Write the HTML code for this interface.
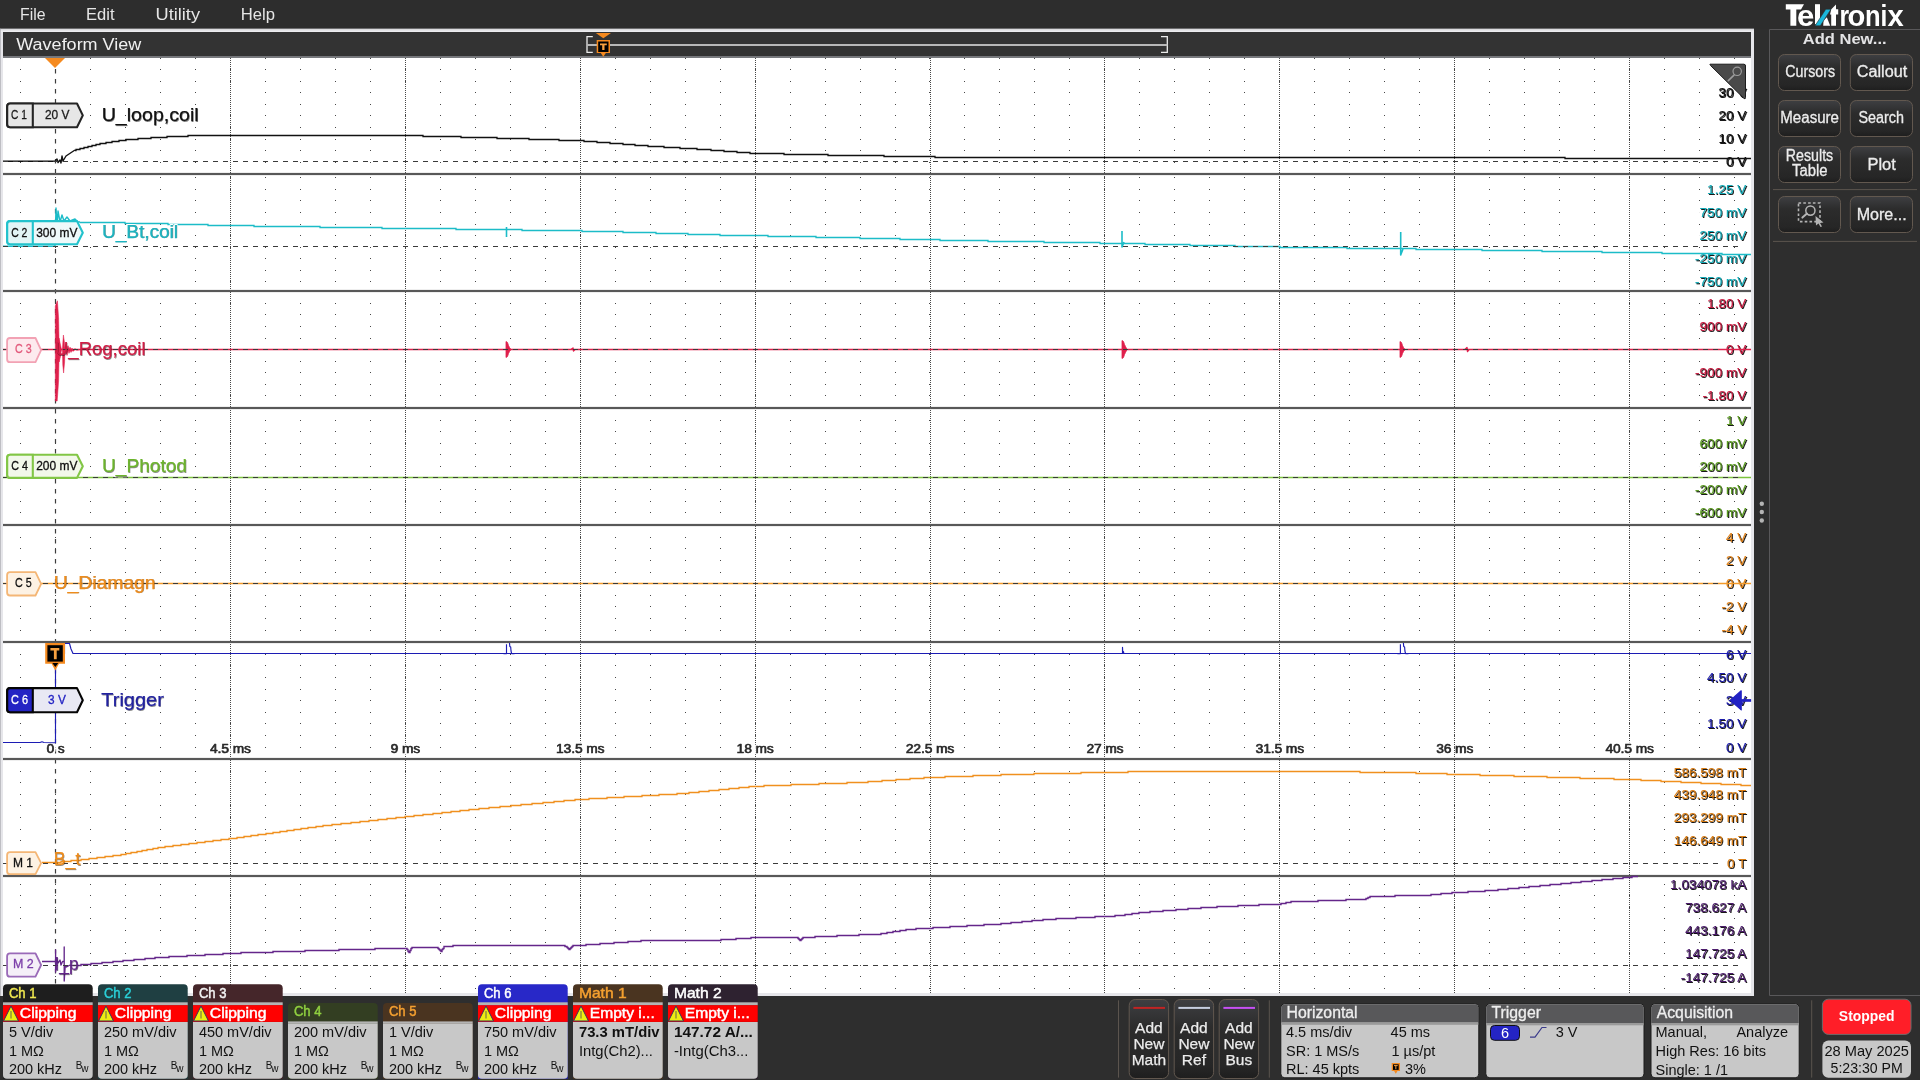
<!DOCTYPE html><html><head><meta charset="utf-8"><title>Tektronix</title><style>html,body{margin:0;padding:0;width:1920px;height:1080px;overflow:hidden;background:#2e2e2e;}body{position:relative;font-family:'Liberation Sans',sans-serif;}</style></head><body><svg width="1920" height="1080" viewBox="0 0 1920 1080" style="position:absolute;left:0;top:0;display:block;will-change:transform">
<g font-family="'Liberation Sans', sans-serif">
<rect x="0" y="0" width="1920" height="1080" fill="#2e2e2e"/>
<rect x="0" y="0" width="1920" height="28.6" fill="#2d2d2d"/>
<defs><linearGradient id="fr" x1="0" y1="0" x2="0" y2="1"><stop offset="0" stop-color="#d4d4d8"/><stop offset="1" stop-color="#f2f2f4"/></linearGradient></defs>
<rect x="0" y="28.8" width="1754" height="967.2" fill="#e6e6ea"/>
<rect x="0" y="28.8" width="1754" height="3.2" fill="url(#fr)"/>
<rect x="0" y="28.8" width="0.8" height="967.2" fill="#b4b4ba"/>
<rect x="3" y="32" width="1748" height="24.3" fill="#333333"/>
<rect x="3" y="56.3" width="1748" height="1.5" fill="#5e6064"/>
<rect x="3" y="58" width="1748" height="935" fill="#ffffff"/>
<g stroke="#484848" stroke-width="1" stroke-dasharray="1 33.98" shape-rendering="crispEdges"><line x1="20" x2="1751" y1="58.5" y2="58.5"/><line x1="20" x2="1751" y1="69.5" y2="69.5"/><line x1="20" x2="1751" y1="81.5" y2="81.5"/><line x1="20" x2="1751" y1="92.5" y2="92.5"/><line x1="20" x2="1751" y1="104.5" y2="104.5"/><line x1="20" x2="1751" y1="115.5" y2="115.5"/><line x1="20" x2="1751" y1="127.5" y2="127.5"/><line x1="20" x2="1751" y1="139.5" y2="139.5"/><line x1="20" x2="1751" y1="150.5" y2="150.5"/><line x1="20" x2="1751" y1="162.5" y2="162.5"/><line x1="20" x2="1751" y1="177.5" y2="177.5"/><line x1="20" x2="1751" y1="189.5" y2="189.5"/><line x1="20" x2="1751" y1="200.5" y2="200.5"/><line x1="20" x2="1751" y1="212.5" y2="212.5"/><line x1="20" x2="1751" y1="224.5" y2="224.5"/><line x1="20" x2="1751" y1="235.5" y2="235.5"/><line x1="20" x2="1751" y1="247.5" y2="247.5"/><line x1="20" x2="1751" y1="258.5" y2="258.5"/><line x1="20" x2="1751" y1="270.5" y2="270.5"/><line x1="20" x2="1751" y1="281.5" y2="281.5"/><line x1="20" x2="1751" y1="291.5" y2="291.5"/><line x1="20" x2="1751" y1="303.5" y2="303.5"/><line x1="20" x2="1751" y1="314.5" y2="314.5"/><line x1="20" x2="1751" y1="326.5" y2="326.5"/><line x1="20" x2="1751" y1="338.5" y2="338.5"/><line x1="20" x2="1751" y1="349.5" y2="349.5"/><line x1="20" x2="1751" y1="361.5" y2="361.5"/><line x1="20" x2="1751" y1="372.5" y2="372.5"/><line x1="20" x2="1751" y1="384.5" y2="384.5"/><line x1="20" x2="1751" y1="395.5" y2="395.5"/><line x1="20" x2="1751" y1="420.5" y2="420.5"/><line x1="20" x2="1751" y1="431.5" y2="431.5"/><line x1="20" x2="1751" y1="443.5" y2="443.5"/><line x1="20" x2="1751" y1="454.5" y2="454.5"/><line x1="20" x2="1751" y1="466.5" y2="466.5"/><line x1="20" x2="1751" y1="477.5" y2="477.5"/><line x1="20" x2="1751" y1="489.5" y2="489.5"/><line x1="20" x2="1751" y1="501.5" y2="501.5"/><line x1="20" x2="1751" y1="512.5" y2="512.5"/><line x1="20" x2="1751" y1="525.5" y2="525.5"/><line x1="20" x2="1751" y1="537.5" y2="537.5"/><line x1="20" x2="1751" y1="548.5" y2="548.5"/><line x1="20" x2="1751" y1="560.5" y2="560.5"/><line x1="20" x2="1751" y1="572.5" y2="572.5"/><line x1="20" x2="1751" y1="583.5" y2="583.5"/><line x1="20" x2="1751" y1="595.5" y2="595.5"/><line x1="20" x2="1751" y1="606.5" y2="606.5"/><line x1="20" x2="1751" y1="618.5" y2="618.5"/><line x1="20" x2="1751" y1="630.5" y2="630.5"/><line x1="20" x2="1751" y1="642.5" y2="642.5"/><line x1="20" x2="1751" y1="654.5" y2="654.5"/><line x1="20" x2="1751" y1="665.5" y2="665.5"/><line x1="20" x2="1751" y1="677.5" y2="677.5"/><line x1="20" x2="1751" y1="689.5" y2="689.5"/><line x1="20" x2="1751" y1="700.5" y2="700.5"/><line x1="20" x2="1751" y1="712.5" y2="712.5"/><line x1="20" x2="1751" y1="723.5" y2="723.5"/><line x1="20" x2="1751" y1="735.5" y2="735.5"/><line x1="20" x2="1751" y1="747.5" y2="747.5"/><line x1="20" x2="1751" y1="759.5" y2="759.5"/><line x1="20" x2="1751" y1="771.5" y2="771.5"/><line x1="20" x2="1751" y1="782.5" y2="782.5"/><line x1="20" x2="1751" y1="794.5" y2="794.5"/><line x1="20" x2="1751" y1="805.5" y2="805.5"/><line x1="20" x2="1751" y1="817.5" y2="817.5"/><line x1="20" x2="1751" y1="829.5" y2="829.5"/><line x1="20" x2="1751" y1="840.5" y2="840.5"/><line x1="20" x2="1751" y1="852.5" y2="852.5"/><line x1="20" x2="1751" y1="863.5" y2="863.5"/><line x1="20" x2="1751" y1="884.5" y2="884.5"/><line x1="20" x2="1751" y1="895.5" y2="895.5"/><line x1="20" x2="1751" y1="907.5" y2="907.5"/><line x1="20" x2="1751" y1="918.5" y2="918.5"/><line x1="20" x2="1751" y1="930.5" y2="930.5"/><line x1="20" x2="1751" y1="942.5" y2="942.5"/><line x1="20" x2="1751" y1="953.5" y2="953.5"/><line x1="20" x2="1751" y1="965.5" y2="965.5"/><line x1="20" x2="1751" y1="976.5" y2="976.5"/><line x1="20" x2="1751" y1="988.5" y2="988.5"/></g>
<g stroke="#484848" stroke-width="1" stroke-dasharray="1 1" shape-rendering="crispEdges"><line x1="230.5" x2="230.5" y1="58" y2="993"/><line x1="405.5" x2="405.5" y1="58" y2="993"/><line x1="580.5" x2="580.5" y1="58" y2="993"/><line x1="755.5" x2="755.5" y1="58" y2="993"/><line x1="930.5" x2="930.5" y1="58" y2="993"/><line x1="1104.5" x2="1104.5" y1="58" y2="993"/><line x1="1279.5" x2="1279.5" y1="58" y2="993"/><line x1="1454.5" x2="1454.5" y1="58" y2="993"/><line x1="1629.5" x2="1629.5" y1="58" y2="993"/></g>
<line x1="55.5" x2="55.5" y1="69" y2="993" stroke="#3c3c3c" stroke-width="1.2" stroke-dasharray="4.5 5.5"/>
<rect x="3" y="172.9" width="1748" height="2.2" fill="#585858"/>
<rect x="3" y="289.9" width="1748" height="2.2" fill="#585858"/>
<rect x="3" y="406.9" width="1748" height="2.2" fill="#585858"/>
<rect x="3" y="523.9" width="1748" height="2.2" fill="#585858"/>
<rect x="3" y="640.9" width="1748" height="2.2" fill="#585858"/>
<rect x="3" y="757.9" width="1748" height="2.2" fill="#585858"/>
<rect x="3" y="874.9" width="1748" height="2.2" fill="#585858"/>
<rect x="1718.0" y="86.5" width="29.5" height="13" fill="#ffffff"/>
<text x="1747.3" y="98.1" font-size="13.6" fill="#000000" text-anchor="end" stroke="#000000" stroke-width="0.15" fill-opacity="0.9">30 V</text>
<text x="1746.4" y="97.2" font-size="13.6" fill="#111111" text-anchor="end" stroke="#111111" stroke-width="0.15">30 V</text>
<rect x="1718.0" y="109.5" width="29.5" height="13" fill="#ffffff"/>
<text x="1747.3" y="121.1" font-size="13.6" fill="#000000" text-anchor="end" stroke="#000000" stroke-width="0.15" fill-opacity="0.9">20 V</text>
<text x="1746.4" y="120.2" font-size="13.6" fill="#111111" text-anchor="end" stroke="#111111" stroke-width="0.15">20 V</text>
<rect x="1718.0" y="132.5" width="29.5" height="13" fill="#ffffff"/>
<text x="1747.3" y="144.1" font-size="13.6" fill="#000000" text-anchor="end" stroke="#000000" stroke-width="0.15" fill-opacity="0.9">10 V</text>
<text x="1746.4" y="143.2" font-size="13.6" fill="#111111" text-anchor="end" stroke="#111111" stroke-width="0.15">10 V</text>
<rect x="1725.6" y="155.5" width="21.9" height="13" fill="#ffffff"/>
<text x="1747.3" y="167.1" font-size="13.6" fill="#000000" text-anchor="end" stroke="#000000" stroke-width="0.15" fill-opacity="0.9">0 V</text>
<text x="1746.4" y="166.2" font-size="13.6" fill="#111111" text-anchor="end" stroke="#111111" stroke-width="0.15">0 V</text>
<rect x="1706.7" y="183.5" width="40.8" height="13" fill="#ffffff"/>
<text x="1747.3" y="195.1" font-size="13.6" fill="#000000" text-anchor="end" stroke="#000000" stroke-width="0.15" fill-opacity="0.9">1.25 V</text>
<text x="1746.4" y="194.2" font-size="13.6" fill="#14aab6" text-anchor="end" stroke="#14aab6" stroke-width="0.15">1.25 V</text>
<rect x="1699.1" y="206.5" width="48.4" height="13" fill="#ffffff"/>
<text x="1747.3" y="218.1" font-size="13.6" fill="#000000" text-anchor="end" stroke="#000000" stroke-width="0.15" fill-opacity="0.9">750 mV</text>
<text x="1746.4" y="217.2" font-size="13.6" fill="#14aab6" text-anchor="end" stroke="#14aab6" stroke-width="0.15">750 mV</text>
<rect x="1699.1" y="229.5" width="48.4" height="13" fill="#ffffff"/>
<text x="1747.3" y="241.1" font-size="13.6" fill="#000000" text-anchor="end" stroke="#000000" stroke-width="0.15" fill-opacity="0.9">250 mV</text>
<text x="1746.4" y="240.2" font-size="13.6" fill="#14aab6" text-anchor="end" stroke="#14aab6" stroke-width="0.15">250 mV</text>
<rect x="1694.6" y="252.5" width="52.9" height="13" fill="#ffffff"/>
<text x="1747.3" y="264.1" font-size="13.6" fill="#000000" text-anchor="end" stroke="#000000" stroke-width="0.15" fill-opacity="0.9">-250 mV</text>
<text x="1746.4" y="263.2" font-size="13.6" fill="#14aab6" text-anchor="end" stroke="#14aab6" stroke-width="0.15">-250 mV</text>
<rect x="1694.6" y="275.5" width="52.9" height="13" fill="#ffffff"/>
<text x="1747.3" y="287.1" font-size="13.6" fill="#000000" text-anchor="end" stroke="#000000" stroke-width="0.15" fill-opacity="0.9">-750 mV</text>
<text x="1746.4" y="286.2" font-size="13.6" fill="#14aab6" text-anchor="end" stroke="#14aab6" stroke-width="0.15">-750 mV</text>
<rect x="1706.7" y="297.7" width="40.8" height="13" fill="#ffffff"/>
<text x="1747.3" y="309.3" font-size="13.6" fill="#000000" text-anchor="end" stroke="#000000" stroke-width="0.15" fill-opacity="0.9">1.80 V</text>
<text x="1746.4" y="308.4" font-size="13.6" fill="#c81a40" text-anchor="end" stroke="#c81a40" stroke-width="0.15">1.80 V</text>
<rect x="1699.1" y="320.5" width="48.4" height="13" fill="#ffffff"/>
<text x="1747.3" y="332.1" font-size="13.6" fill="#000000" text-anchor="end" stroke="#000000" stroke-width="0.15" fill-opacity="0.9">900 mV</text>
<text x="1746.4" y="331.2" font-size="13.6" fill="#c81a40" text-anchor="end" stroke="#c81a40" stroke-width="0.15">900 mV</text>
<rect x="1725.6" y="343.5" width="21.9" height="13" fill="#ffffff"/>
<text x="1747.3" y="355.1" font-size="13.6" fill="#000000" text-anchor="end" stroke="#000000" stroke-width="0.15" fill-opacity="0.9">0 V</text>
<text x="1746.4" y="354.2" font-size="13.6" fill="#c81a40" text-anchor="end" stroke="#c81a40" stroke-width="0.15">0 V</text>
<rect x="1694.6" y="366.5" width="52.9" height="13" fill="#ffffff"/>
<text x="1747.3" y="378.1" font-size="13.6" fill="#000000" text-anchor="end" stroke="#000000" stroke-width="0.15" fill-opacity="0.9">-900 mV</text>
<text x="1746.4" y="377.2" font-size="13.6" fill="#c81a40" text-anchor="end" stroke="#c81a40" stroke-width="0.15">-900 mV</text>
<rect x="1702.2" y="389.3" width="45.4" height="13" fill="#ffffff"/>
<text x="1747.3" y="400.90000000000003" font-size="13.6" fill="#000000" text-anchor="end" stroke="#000000" stroke-width="0.15" fill-opacity="0.9">-1.80 V</text>
<text x="1746.4" y="400.0" font-size="13.6" fill="#c81a40" text-anchor="end" stroke="#c81a40" stroke-width="0.15">-1.80 V</text>
<rect x="1725.6" y="414.3" width="21.9" height="13" fill="#ffffff"/>
<text x="1747.3" y="425.90000000000003" font-size="13.6" fill="#000000" text-anchor="end" stroke="#000000" stroke-width="0.15" fill-opacity="0.9">1 V</text>
<text x="1746.4" y="425.0" font-size="13.6" fill="#5a9a20" text-anchor="end" stroke="#5a9a20" stroke-width="0.15">1 V</text>
<rect x="1699.1" y="437.3" width="48.4" height="13" fill="#ffffff"/>
<text x="1747.3" y="448.90000000000003" font-size="13.6" fill="#000000" text-anchor="end" stroke="#000000" stroke-width="0.15" fill-opacity="0.9">600 mV</text>
<text x="1746.4" y="448.0" font-size="13.6" fill="#5a9a20" text-anchor="end" stroke="#5a9a20" stroke-width="0.15">600 mV</text>
<rect x="1699.1" y="460.5" width="48.4" height="13" fill="#ffffff"/>
<text x="1747.3" y="472.1" font-size="13.6" fill="#000000" text-anchor="end" stroke="#000000" stroke-width="0.15" fill-opacity="0.9">200 mV</text>
<text x="1746.4" y="471.2" font-size="13.6" fill="#5a9a20" text-anchor="end" stroke="#5a9a20" stroke-width="0.15">200 mV</text>
<rect x="1694.6" y="483.5" width="52.9" height="13" fill="#ffffff"/>
<text x="1747.3" y="495.1" font-size="13.6" fill="#000000" text-anchor="end" stroke="#000000" stroke-width="0.15" fill-opacity="0.9">-200 mV</text>
<text x="1746.4" y="494.2" font-size="13.6" fill="#5a9a20" text-anchor="end" stroke="#5a9a20" stroke-width="0.15">-200 mV</text>
<rect x="1694.6" y="506.5" width="52.9" height="13" fill="#ffffff"/>
<text x="1747.3" y="518.1" font-size="13.6" fill="#000000" text-anchor="end" stroke="#000000" stroke-width="0.15" fill-opacity="0.9">-600 mV</text>
<text x="1746.4" y="517.2" font-size="13.6" fill="#5a9a20" text-anchor="end" stroke="#5a9a20" stroke-width="0.15">-600 mV</text>
<rect x="1725.6" y="531.5" width="21.9" height="13" fill="#ffffff"/>
<text x="1747.3" y="543.1" font-size="13.6" fill="#000000" text-anchor="end" stroke="#000000" stroke-width="0.15" fill-opacity="0.9">4 V</text>
<text x="1746.4" y="542.2" font-size="13.6" fill="#e0821a" text-anchor="end" stroke="#e0821a" stroke-width="0.15">4 V</text>
<rect x="1725.6" y="554.7" width="21.9" height="13" fill="#ffffff"/>
<text x="1747.3" y="566.3000000000001" font-size="13.6" fill="#000000" text-anchor="end" stroke="#000000" stroke-width="0.15" fill-opacity="0.9">2 V</text>
<text x="1746.4" y="565.4000000000001" font-size="13.6" fill="#e0821a" text-anchor="end" stroke="#e0821a" stroke-width="0.15">2 V</text>
<rect x="1725.6" y="577.3" width="21.9" height="13" fill="#ffffff"/>
<text x="1747.3" y="588.9" font-size="13.6" fill="#000000" text-anchor="end" stroke="#000000" stroke-width="0.15" fill-opacity="0.9">0 V</text>
<text x="1746.4" y="588.0" font-size="13.6" fill="#e0821a" text-anchor="end" stroke="#e0821a" stroke-width="0.15">0 V</text>
<rect x="1721.1" y="600.5" width="26.4" height="13" fill="#ffffff"/>
<text x="1747.3" y="612.1" font-size="13.6" fill="#000000" text-anchor="end" stroke="#000000" stroke-width="0.15" fill-opacity="0.9">-2 V</text>
<text x="1746.4" y="611.2" font-size="13.6" fill="#e0821a" text-anchor="end" stroke="#e0821a" stroke-width="0.15">-2 V</text>
<rect x="1721.1" y="623.5" width="26.4" height="13" fill="#ffffff"/>
<text x="1747.3" y="635.1" font-size="13.6" fill="#000000" text-anchor="end" stroke="#000000" stroke-width="0.15" fill-opacity="0.9">-4 V</text>
<text x="1746.4" y="634.2" font-size="13.6" fill="#e0821a" text-anchor="end" stroke="#e0821a" stroke-width="0.15">-4 V</text>
<rect x="1725.6" y="648.5" width="21.9" height="13" fill="#ffffff"/>
<text x="1747.3" y="660.1" font-size="13.6" fill="#000000" text-anchor="end" stroke="#000000" stroke-width="0.15" fill-opacity="0.9">6 V</text>
<text x="1746.4" y="659.2" font-size="13.6" fill="#1c1ca8" text-anchor="end" stroke="#1c1ca8" stroke-width="0.15">6 V</text>
<rect x="1706.7" y="671.5" width="40.8" height="13" fill="#ffffff"/>
<text x="1747.3" y="683.1" font-size="13.6" fill="#000000" text-anchor="end" stroke="#000000" stroke-width="0.15" fill-opacity="0.9">4.50 V</text>
<text x="1746.4" y="682.2" font-size="13.6" fill="#1c1ca8" text-anchor="end" stroke="#1c1ca8" stroke-width="0.15">4.50 V</text>
<rect x="1725.6" y="694.5" width="21.9" height="13" fill="#ffffff"/>
<text x="1747.3" y="706.1" font-size="13.6" fill="#000000" text-anchor="end" stroke="#000000" stroke-width="0.15" fill-opacity="0.9">3 V</text>
<text x="1746.4" y="705.2" font-size="13.6" fill="#1c1ca8" text-anchor="end" stroke="#1c1ca8" stroke-width="0.15">3 V</text>
<rect x="1706.7" y="717.7" width="40.8" height="13" fill="#ffffff"/>
<text x="1747.3" y="729.3000000000001" font-size="13.6" fill="#000000" text-anchor="end" stroke="#000000" stroke-width="0.15" fill-opacity="0.9">1.50 V</text>
<text x="1746.4" y="728.4000000000001" font-size="13.6" fill="#1c1ca8" text-anchor="end" stroke="#1c1ca8" stroke-width="0.15">1.50 V</text>
<rect x="1725.6" y="741.0" width="21.9" height="13" fill="#ffffff"/>
<text x="1747.3" y="752.6" font-size="13.6" fill="#000000" text-anchor="end" stroke="#000000" stroke-width="0.15" fill-opacity="0.9">0 V</text>
<text x="1746.4" y="751.7" font-size="13.6" fill="#1c1ca8" text-anchor="end" stroke="#1c1ca8" stroke-width="0.15">0 V</text>
<rect x="1673.4" y="766.0" width="74.1" height="13" fill="#ffffff"/>
<text x="1747.3" y="777.6" font-size="13.6" fill="#000000" text-anchor="end" stroke="#000000" stroke-width="0.15" fill-opacity="0.9">586.598 mT</text>
<text x="1746.4" y="776.7" font-size="13.6" fill="#d87c14" text-anchor="end" stroke="#d87c14" stroke-width="0.15">586.598 mT</text>
<rect x="1673.4" y="788.5" width="74.1" height="13" fill="#ffffff"/>
<text x="1747.3" y="800.1" font-size="13.6" fill="#000000" text-anchor="end" stroke="#000000" stroke-width="0.15" fill-opacity="0.9">439.948 mT</text>
<text x="1746.4" y="799.2" font-size="13.6" fill="#d87c14" text-anchor="end" stroke="#d87c14" stroke-width="0.15">439.948 mT</text>
<rect x="1673.4" y="811.5" width="74.1" height="13" fill="#ffffff"/>
<text x="1747.3" y="823.1" font-size="13.6" fill="#000000" text-anchor="end" stroke="#000000" stroke-width="0.15" fill-opacity="0.9">293.299 mT</text>
<text x="1746.4" y="822.2" font-size="13.6" fill="#d87c14" text-anchor="end" stroke="#d87c14" stroke-width="0.15">293.299 mT</text>
<rect x="1673.4" y="834.7" width="74.1" height="13" fill="#ffffff"/>
<text x="1747.3" y="846.3000000000001" font-size="13.6" fill="#000000" text-anchor="end" stroke="#000000" stroke-width="0.15" fill-opacity="0.9">146.649 mT</text>
<text x="1746.4" y="845.4000000000001" font-size="13.6" fill="#d87c14" text-anchor="end" stroke="#d87c14" stroke-width="0.15">146.649 mT</text>
<rect x="1726.6" y="857.3" width="20.9" height="13" fill="#ffffff"/>
<text x="1747.3" y="868.9" font-size="13.6" fill="#000000" text-anchor="end" stroke="#000000" stroke-width="0.15" fill-opacity="0.9">0 T</text>
<text x="1746.4" y="868.0" font-size="13.6" fill="#d87c14" text-anchor="end" stroke="#d87c14" stroke-width="0.15">0 T</text>
<rect x="1669.6" y="878.5" width="77.9" height="13" fill="#ffffff"/>
<text x="1747.3" y="890.1" font-size="13.6" fill="#000000" text-anchor="end" stroke="#000000" stroke-width="0.15" fill-opacity="0.9">1.034078 kA</text>
<text x="1746.4" y="889.2" font-size="13.6" fill="#4c1c6c" text-anchor="end" stroke="#4c1c6c" stroke-width="0.15">1.034078 kA</text>
<rect x="1684.7" y="901.5" width="62.8" height="13" fill="#ffffff"/>
<text x="1747.3" y="913.1" font-size="13.6" fill="#000000" text-anchor="end" stroke="#000000" stroke-width="0.15" fill-opacity="0.9">738.627 A</text>
<text x="1746.4" y="912.2" font-size="13.6" fill="#4c1c6c" text-anchor="end" stroke="#4c1c6c" stroke-width="0.15">738.627 A</text>
<rect x="1684.7" y="924.7" width="62.8" height="13" fill="#ffffff"/>
<text x="1747.3" y="936.3000000000001" font-size="13.6" fill="#000000" text-anchor="end" stroke="#000000" stroke-width="0.15" fill-opacity="0.9">443.176 A</text>
<text x="1746.4" y="935.4000000000001" font-size="13.6" fill="#4c1c6c" text-anchor="end" stroke="#4c1c6c" stroke-width="0.15">443.176 A</text>
<rect x="1684.7" y="947.7" width="62.8" height="13" fill="#ffffff"/>
<text x="1747.3" y="959.3000000000001" font-size="13.6" fill="#000000" text-anchor="end" stroke="#000000" stroke-width="0.15" fill-opacity="0.9">147.725 A</text>
<text x="1746.4" y="958.4000000000001" font-size="13.6" fill="#4c1c6c" text-anchor="end" stroke="#4c1c6c" stroke-width="0.15">147.725 A</text>
<rect x="1680.2" y="971.0" width="67.3" height="13" fill="#ffffff"/>
<text x="1747.3" y="982.6" font-size="13.6" fill="#000000" text-anchor="end" stroke="#000000" stroke-width="0.15" fill-opacity="0.9">-147.725 A</text>
<text x="1746.4" y="981.7" font-size="13.6" fill="#4c1c6c" text-anchor="end" stroke="#4c1c6c" stroke-width="0.15">-147.725 A</text>
<text x="56.1" y="753.2" font-size="13.6" fill="#000000" text-anchor="middle" stroke="#ffffff" stroke-width="3.5" paint-order="stroke" stroke-linejoin="round" fill-opacity="0.55">0 s</text>
<text x="55.5" y="752.6" font-size="13.6" fill="#2a2a2a" text-anchor="middle" stroke="#2a2a2a" stroke-width="0.5">0 s</text>
<text x="231.0" y="753.2" font-size="13.6" fill="#000000" text-anchor="middle" stroke="#ffffff" stroke-width="3.5" paint-order="stroke" stroke-linejoin="round" fill-opacity="0.55">4.5 ms</text>
<text x="230.4" y="752.6" font-size="13.6" fill="#2a2a2a" text-anchor="middle" stroke="#2a2a2a" stroke-width="0.5">4.5 ms</text>
<text x="405.90000000000003" y="753.2" font-size="13.6" fill="#000000" text-anchor="middle" stroke="#ffffff" stroke-width="3.5" paint-order="stroke" stroke-linejoin="round" fill-opacity="0.55">9 ms</text>
<text x="405.3" y="752.6" font-size="13.6" fill="#2a2a2a" text-anchor="middle" stroke="#2a2a2a" stroke-width="0.5">9 ms</text>
<text x="580.8000000000001" y="753.2" font-size="13.6" fill="#000000" text-anchor="middle" stroke="#ffffff" stroke-width="3.5" paint-order="stroke" stroke-linejoin="round" fill-opacity="0.55">13.5 ms</text>
<text x="580.2" y="752.6" font-size="13.6" fill="#2a2a2a" text-anchor="middle" stroke="#2a2a2a" stroke-width="0.5">13.5 ms</text>
<text x="755.7" y="753.2" font-size="13.6" fill="#000000" text-anchor="middle" stroke="#ffffff" stroke-width="3.5" paint-order="stroke" stroke-linejoin="round" fill-opacity="0.55">18 ms</text>
<text x="755.1" y="752.6" font-size="13.6" fill="#2a2a2a" text-anchor="middle" stroke="#2a2a2a" stroke-width="0.5">18 ms</text>
<text x="930.6" y="753.2" font-size="13.6" fill="#000000" text-anchor="middle" stroke="#ffffff" stroke-width="3.5" paint-order="stroke" stroke-linejoin="round" fill-opacity="0.55">22.5 ms</text>
<text x="930.0" y="752.6" font-size="13.6" fill="#2a2a2a" text-anchor="middle" stroke="#2a2a2a" stroke-width="0.5">22.5 ms</text>
<text x="1105.5" y="753.2" font-size="13.6" fill="#000000" text-anchor="middle" stroke="#ffffff" stroke-width="3.5" paint-order="stroke" stroke-linejoin="round" fill-opacity="0.55">27 ms</text>
<text x="1104.9" y="752.6" font-size="13.6" fill="#2a2a2a" text-anchor="middle" stroke="#2a2a2a" stroke-width="0.5">27 ms</text>
<text x="1280.3999999999999" y="753.2" font-size="13.6" fill="#000000" text-anchor="middle" stroke="#ffffff" stroke-width="3.5" paint-order="stroke" stroke-linejoin="round" fill-opacity="0.55">31.5 ms</text>
<text x="1279.8" y="752.6" font-size="13.6" fill="#2a2a2a" text-anchor="middle" stroke="#2a2a2a" stroke-width="0.5">31.5 ms</text>
<text x="1455.3" y="753.2" font-size="13.6" fill="#000000" text-anchor="middle" stroke="#ffffff" stroke-width="3.5" paint-order="stroke" stroke-linejoin="round" fill-opacity="0.55">36 ms</text>
<text x="1454.7" y="752.6" font-size="13.6" fill="#2a2a2a" text-anchor="middle" stroke="#2a2a2a" stroke-width="0.5">36 ms</text>
<text x="1630.2" y="753.2" font-size="13.6" fill="#000000" text-anchor="middle" stroke="#ffffff" stroke-width="3.5" paint-order="stroke" stroke-linejoin="round" fill-opacity="0.55">40.5 ms</text>
<text x="1629.6000000000001" y="752.6" font-size="13.6" fill="#2a2a2a" text-anchor="middle" stroke="#2a2a2a" stroke-width="0.5">40.5 ms</text>
<polyline points="3,161.3 55,161.3 57,159 58,162.5 60,160 61,163 62,156 63,161 66,156 75,150" fill="none" stroke="#111111" stroke-width="1.4" stroke-linejoin="round"/>
<path d="M75,150.5 H76 V149.5 H80 V148.5 H84 V147.5 H88 V146.5 H92 V145.5 H96 V144.5 H100 V143.5 H106 V142.5 H112 V141.5 H119 V140.5 H126 V139.5 H138 V138.5 H151 V137.5 H167 V136.5 H188 V135.5 H423 V136.5 H461 V137.5 H497 V138.5 H529 V139.5 H559 V140.5 H584 V141.5 H597 V142.5 H610 V143.5 H623 V144.5 H635 V145.5 H648 V146.5 H664 V147.5 H680 V148.5 H697 V149.5 H711 V150.5 H724 V151.5 H737 V152.5 H750 V153.5 H784 V154.5 H828 V155.5 H884 V156.5 H935 V157.5 H1565 V158.5 H1751" fill="none" stroke="#111111" stroke-width="1.3"/>
<polyline points="3,246.3 55,246.3 56,208 57,226 58,211 60,222 62,215 64,221 67,217 70,221 75,219 78,222 80,222" fill="none" stroke="#1cbcc8" stroke-width="1.4" stroke-linejoin="round"/>
<path d="M80,222.5 H125 V223.5 H168 V224.5 H208 V225.5 H254 V226.5 H320 V227.5 H382 V228.5 H456 V229.5 H522 V230.5 H582 V231.5 H623 V232.5 H656 V233.5 H688 V234.5 H720 V235.5 H768 V236.5 H816 V237.5 H860 V238.5 H900 V239.5 H940 V240.5 H988 V241.5 H1044 V242.5 H1100 V243.5 H1145 V244.5 H1190 V245.5 H1235 V246.5 H1280 V247.5 H1347 V248.5 H1416 V249.5 H1482 V250.5 H1542 V251.5 H1602 V252.5 H1662 V253.5 H1722 V254.5 H1751" fill="none" stroke="#1cbcc8" stroke-width="1.3"/>
<polyline points="506.5,227 506.5,237" fill="none" stroke="#1cbcc8" stroke-width="1.6" stroke-linejoin="round"/>
<polyline points="1122,231 1122,247 1124,242" fill="none" stroke="#1cbcc8" stroke-width="1.6" stroke-linejoin="round"/>
<polyline points="1400.7,232 1400.7,255 1403,249" fill="none" stroke="#1cbcc8" stroke-width="1.6" stroke-linejoin="round"/>
<polyline points="3,349.5 1751,349.5" fill="none" stroke="#e0204c" stroke-width="1.6" stroke-linejoin="round"/>
<polygon points="55.3,306 57.4,300.8 58.6,318 59.2,349.5 58.6,381 57.2,401 55.3,401" fill="#e0204c" stroke="#e0204c" stroke-width="0.5"/>
<polygon points="63.4,335 64.4,342 65,349.5 64.6,362 63.6,373 62.8,365 62.4,349.5 62.8,343" fill="#e0204c" stroke="#e0204c" stroke-width="0.5"/>
<polygon points="59,338 60.5,345 61.5,349.5 60.6,356 59.2,362" fill="#e0204c" stroke="#e0204c" stroke-width="0.5"/>
<polyline points="65,349.5 66,344 67,355 68,346 69,353 70,347.5 71,352 72,348.5 73,351 75,349 77,350 80,349.5" fill="none" stroke="#e0204c" stroke-width="1.2" stroke-linejoin="round"/>
<polygon points="506,341.5 507.5,342.5 508.5,345.5 509.5,347.5 511,349.5 509.5,351.5 508.5,353.5 507.5,356.5 506,357.5" fill="#e0204c" stroke="#e0204c" stroke-width="0.8"/>
<polygon points="1122,340.5 1123.5,341.5 1124.5,344.5 1125.5,346.5 1127,349.5 1125.5,352.5 1124.5,354.5 1123.5,357.5 1122,358.5" fill="#e0204c" stroke="#e0204c" stroke-width="0.8"/>
<polygon points="1400,341.5 1401.5,342.5 1402.5,345.5 1403.5,347.5 1405,349.5 1403.5,351.5 1402.5,353.5 1401.5,356.5 1400,357.5" fill="#e0204c" stroke="#e0204c" stroke-width="0.8"/>
<polyline points="1465,349.5 1467,347.5 1467.5,351.5 1469,349.5" fill="none" stroke="#e0204c" stroke-width="1.4" stroke-linejoin="round"/>
<polyline points="571,349.5 573,348.0 573.5,351.0 575,349.5" fill="none" stroke="#e0204c" stroke-width="1.4" stroke-linejoin="round"/>
<polyline points="3,477.5 1751,477.5" fill="none" stroke="#7cc43c" stroke-width="1.4" stroke-linejoin="round"/>
<polyline points="3,583.5 1751,583.5" fill="none" stroke="#f39a2a" stroke-width="1.4" stroke-linejoin="round"/>
<polyline points="3,742.5 40,742.5 42,741.8 44,742.5 55.5,742.8 55.5,643.5 64.5,643.5 64.5,654 64.5,643.5 69.5,643.5 71,649 73,653.5 1751,653.5" fill="none" stroke="#1c1cb4" stroke-width="1.15" stroke-linejoin="round"/>
<polyline points="503.5,653.6 506.5,653.6 506.5,644.3" fill="none" stroke="#1c1cb4" stroke-width="1.15" stroke-linejoin="round"/>
<polyline points="509.5,643 509.8,646.5 510.7,647 511.0,651 511.7,653.6 514.5,653.6" fill="none" stroke="#1c1cb4" stroke-width="1.15" stroke-linejoin="round"/>
<polyline points="1397.4,653.6 1400.4,653.6 1400.4,644.3" fill="none" stroke="#1c1cb4" stroke-width="1.15" stroke-linejoin="round"/>
<polyline points="1403.4,643 1403.7,646.5 1404.6000000000001,647 1404.9,651 1405.6000000000001,653.6 1408.4,653.6" fill="none" stroke="#1c1cb4" stroke-width="1.15" stroke-linejoin="round"/>
<polyline points="1122.5,653.6 1122.5,647.3 1122.7,651.5 1123.5,651.5 1123.8,653.6" fill="none" stroke="#1c1cb4" stroke-width="1.15" stroke-linejoin="round"/>
<path d="M42,862.5 H61 V861.5 H71 V860.5 H81 V859.5 H89 V858.5 H97 V857.5 H105 V856.5 H113 V855.5 H121 V854.5 H126 V853.5 H131 V852.5 H137 V851.5 H142 V850.5 H147 V849.5 H153 V848.5 H158 V847.5 H165 V846.5 H173 V845.5 H181 V844.5 H189 V843.5 H197 V842.5 H205 V841.5 H213 V840.5 H221 V839.5 H229 V838.5 H237 V837.5 H244 V836.5 H251 V835.5 H258 V834.5 H266 V833.5 H273 V832.5 H280 V831.5 H287 V830.5 H294 V829.5 H301 V828.5 H308 V827.5 H316 V826.5 H323 V825.5 H332 V824.5 H341 V823.5 H351 V822.5 H360 V821.5 H369 V820.5 H378 V819.5 H387 V818.5 H396 V817.5 H405 V816.5 H414 V815.5 H423 V814.5 H433 V813.5 H442 V812.5 H451 V811.5 H460 V810.5 H469 V809.5 H479 V808.5 H489 V807.5 H500 V806.5 H511 V805.5 H521 V804.5 H532 V803.5 H543 V802.5 H554 V801.5 H564 V800.5 H575 V799.5 H589 V798.5 H607 V797.5 H624 V796.5 H642 V795.5 H659 V794.5 H677 V793.5 H689 V792.5 H699 V791.5 H709 V790.5 H719 V789.5 H729 V788.5 H739 V787.5 H749 V786.5 H764 V785.5 H791 V784.5 H819 V783.5 H847 V782.5 H868 V781.5 H882 V780.5 H896 V779.5 H910 V778.5 H924 V777.5 H945 V776.5 H973 V775.5 H1001 V774.5 H1034 V773.5 H1081 V772.5 H1128 V771.5 H1360 V772.5 H1416 V773.5 H1447 V774.5 H1480 V775.5 H1514 V776.5 H1547 V777.5 H1580 V778.5 H1614 V779.5 H1641 V780.5 H1661 V781.5 H1681 V782.5 H1701 V783.5 H1721 V784.5 H1741 V785.5 H1751" fill="none" stroke="#f0901e" stroke-width="1.3"/>
<polyline points="42,961.5 55.6,961.5 55.6,950 55.6,972 56.6,958 58,963 60,960 61,965 62.5,961.5 64.2,961.5 64.2,947 64.2,981 65.2,966 66.5,967 70,965" fill="none" stroke="#64268a" stroke-width="1.35" stroke-linejoin="round"/>
<path d="M70,965.5 H81 V964.5 H91 V963.5 H102 V962.5 H113 V961.5 H123 V960.5 H134 V959.5 H145 V958.5 H155 V957.5 H169 V956.5 H187 V955.5 H205 V954.5 H223 V953.5 H241 V952.5 H273 V951.5 H305 V950.5 H339 V949.5 H375 V948.5 H407 V949.5 H408 V951.5 H409 V952.5 H410 V950.5 H411 V948.5 H412 V947.5 H438 V948.5 H439 V949.5 H440 V950.5 H441 V951.5 H442 V949.5 H443 V948.5 H444 V946.5 H453 V945.5 H565 V946.5 H567 V947.5 H568 V948.5 H569 V949.5 H570 V948.5 H571 V947.5 H572 V946.5 H573 V945.5 H586 V944.5 H600 V943.5 H614 V942.5 H628 V941.5 H641 V940.5 H721 V939.5 H736 V938.5 H751 V937.5 H798 V938.5 H799 V939.5 H800 V940.5 H801 V939.5 H802 V938.5 H803 V937.5 H815 V936.5 H837 V935.5 H859 V934.5 H881 V933.5 H887 V932.5 H893 V931.5 H900 V930.5 H906 V929.5 H916 V928.5 H933 V927.5 H950 V926.5 H967 V925.5 H984 V924.5 H1001 V923.5 H1011 V922.5 H1022 V921.5 H1032 V920.5 H1043 V919.5 H1056 V918.5 H1076 V917.5 H1095 V916.5 H1115 V915.5 H1125 V914.5 H1132 V913.5 H1139 V912.5 H1150 V911.5 H1163 V910.5 H1176 V909.5 H1188 V908.5 H1201 V907.5 H1217 V906.5 H1238 V905.5 H1259 V904.5 H1281 V903.5 H1286 V902.5 H1291 V901.5 H1318 V900.5 H1346 V899.5 H1366 V898.5 H1368 V897.5 H1370 V896.5 H1395 V895.5 H1431 V894.5 H1441 V893.5 H1452 V892.5 H1468 V891.5 H1485 V890.5 H1498 V889.5 H1508 V888.5 H1519 V887.5 H1529 V886.5 H1540 V885.5 H1550 V884.5 H1561 V883.5 H1571 V882.5 H1581 V881.5 H1592 V880.5 H1602 V879.5 H1613 V878.5 H1623 V877.5 H1632 V876.5 H1638" fill="none" stroke="#64268a" stroke-width="1.4"/>
<line x1="3" x2="1719" y1="161.5" y2="161.5" stroke="#3a3a3a" stroke-width="1.1" stroke-dasharray="5 5"/>
<line x1="3" x2="1738" y1="246.5" y2="246.5" stroke="#3a3a3a" stroke-width="1.1" stroke-dasharray="5 5"/>
<line x1="3" x2="1720" y1="349.5" y2="349.5" stroke="#3a3a3a" stroke-width="1.1" stroke-dasharray="5 5"/>
<line x1="3" x2="1738" y1="477.5" y2="477.5" stroke="#3a3a3a" stroke-width="1.1" stroke-dasharray="5 5"/>
<line x1="3" x2="1718" y1="583.5" y2="583.5" stroke="#3a3a3a" stroke-width="1.1" stroke-dasharray="5 5"/>
<line x1="3" x2="1722" y1="863.5" y2="863.5" stroke="#3a3a3a" stroke-width="1.1" stroke-dasharray="5 5"/>
<line x1="3" x2="1738" y1="965.5" y2="965.5" stroke="#3a3a3a" stroke-width="1.1" stroke-dasharray="5 5"/>
<polygon points="45,58 65,58 55,68" fill="#f58a1f"/>
<path d="M45.2,643 H65 V663.8 H59 L55.3,670.4 L51.6,663.8 H45.2 Z" fill="#f58a1f"/>
<rect x="47.4" y="645.2" width="15.4" height="16.4" fill="#000"/>
<path d="M52.3,663 L55.3,667 L58.3,663 Z" fill="#000"/>
<path d="M50.4,647.9 H59.3 V650.6 H56.7 V659.2 H53.9 V650.6 H50.4 Z" fill="#f5a040"/>
<path d="M10.2,103.5 H77 L82.8,115.39999999999999 L77,127.29999999999998 H10.2 Q7.2,127.29999999999998 7.2,124.29999999999998 V106.5 Q7.2,103.5 10.2,103.5 Z" fill="#e6e6e6" stroke="#242424" stroke-width="2.1" stroke-linejoin="round"/>
<path d="M10.2,103.5 H32.8 V127.29999999999998 H10.2 Q7.2,127.29999999999998 7.2,124.29999999999998 V106.5 Q7.2,103.5 10.2,103.5 Z" fill="#e6e6e6" stroke="#242424" stroke-width="2.1"/>
<text x="11" y="119" font-size="12.5" fill="#1a1a1a" textLength="15.8" lengthAdjust="spacingAndGlyphs" stroke="#1a1a1a" stroke-width="0.3">C 1</text>
<text x="45" y="119" font-size="12.5" fill="#1a1a1a" textLength="24.5" lengthAdjust="spacingAndGlyphs" stroke="#1a1a1a" stroke-width="0.3">20 V</text>
<path d="M10.2,221.1 H77 L82.8,232.7 L77,244.29999999999998 H10.2 Q7.2,244.29999999999998 7.2,241.29999999999998 V224.1 Q7.2,221.1 10.2,221.1 Z" fill="#eef9fa" stroke="#22c2cc" stroke-width="2.1" stroke-linejoin="round"/>
<path d="M10.2,221.1 H32.8 V244.29999999999998 H10.2 Q7.2,244.29999999999998 7.2,241.29999999999998 V224.1 Q7.2,221.1 10.2,221.1 Z" fill="#e2f5f6" stroke="#22c2cc" stroke-width="2.1"/>
<text x="11.2" y="236.5" font-size="12.5" fill="#101010" textLength="16.2" lengthAdjust="spacingAndGlyphs" stroke="#101010" stroke-width="0.3">C 2</text>
<text x="36.2" y="236.5" font-size="12.5" fill="#101010" textLength="41.2" lengthAdjust="spacingAndGlyphs" stroke="#101010" stroke-width="0.3">300 mV</text>
<path d="M10,338.0 H35.5 L41.1,350.1 L35.5,362.2 H10 Q7.1,362.2 7.1,359.2 V341.0 Q7.1,338.0 10,338.0 Z" fill="#fdeaee" stroke="#f2a2b4" stroke-width="1.8" stroke-linejoin="round"/>
<text x="15" y="352.6" font-size="12.5" fill="#e25a7c" textLength="16.7" lengthAdjust="spacingAndGlyphs" stroke="#e25a7c" stroke-width="0.3">C 3</text>
<path d="M10.2,454.7 H77 L82.8,466.3 L77,477.90000000000003 H10.2 Q7.2,477.90000000000003 7.2,474.90000000000003 V457.7 Q7.2,454.7 10.2,454.7 Z" fill="#f2f8ea" stroke="#82c646" stroke-width="2.1" stroke-linejoin="round"/>
<path d="M10.2,454.7 H32.8 V477.90000000000003 H10.2 Q7.2,477.90000000000003 7.2,474.90000000000003 V457.7 Q7.2,454.7 10.2,454.7 Z" fill="#f2f8ea" stroke="#82c646" stroke-width="2.1"/>
<text x="11.2" y="470" font-size="12.5" fill="#101010" textLength="16.7" lengthAdjust="spacingAndGlyphs" stroke="#101010" stroke-width="0.3">C 4</text>
<text x="36.2" y="470" font-size="12.5" fill="#101010" textLength="41.2" lengthAdjust="spacingAndGlyphs" stroke="#101010" stroke-width="0.3">200 mV</text>
<path d="M10,572.0999999999999 H35.5 L41.1,583.8 L35.5,595.5 H10 Q7.1,595.5 7.1,592.5 V575.0999999999999 Q7.1,572.0999999999999 10,572.0999999999999 Z" fill="#fdf2e4" stroke="#f4b676" stroke-width="1.8" stroke-linejoin="round"/>
<text x="15" y="587.2" font-size="12.5" fill="#101010" textLength="16.7" lengthAdjust="spacingAndGlyphs" stroke="#101010" stroke-width="0.3">C 5</text>
<path d="M10.2,688.1 H77 L82.8,700.2 L77,712.3000000000001 H10.2 Q7.2,712.3000000000001 7.2,709.3000000000001 V691.1 Q7.2,688.1 10.2,688.1 Z" fill="#e8e8f4" stroke="#050505" stroke-width="2.1" stroke-linejoin="round"/>
<path d="M10.2,688.1 H32.8 V712.3000000000001 H10.2 Q7.2,712.3000000000001 7.2,709.3000000000001 V691.1 Q7.2,688.1 10.2,688.1 Z" fill="#2424c4" stroke="#050505" stroke-width="2.1"/>
<text x="11.1" y="704" font-size="12.5" fill="#ffffff" textLength="17" lengthAdjust="spacingAndGlyphs" stroke="#ffffff" stroke-width="0.3">C 6</text>
<text x="48.1" y="704" font-size="12.5" fill="#2424c4" textLength="17.8" lengthAdjust="spacingAndGlyphs" stroke="#2424c4" stroke-width="0.3">3 V</text>
<path d="M10,852.0999999999999 H35.5 L41.1,863.15 L35.5,874.2 H10 Q7.1,874.2 7.1,871.2 V855.0999999999999 Q7.1,852.0999999999999 10,852.0999999999999 Z" fill="#fdf2e4" stroke="#f4b676" stroke-width="1.8" stroke-linejoin="round"/>
<text x="13" y="867.2" font-size="12.5" fill="#101010" textLength="20" lengthAdjust="spacingAndGlyphs" stroke="#101010" stroke-width="0.3">M 1</text>
<path d="M10,953.3 H35.5 L41.1,965.0 L35.5,976.7 H10 Q7.1,976.7 7.1,973.7 V956.3 Q7.1,953.3 10,953.3 Z" fill="#f5eff8" stroke="#9a6ab8" stroke-width="1.8" stroke-linejoin="round"/>
<text x="13" y="968.3" font-size="12.5" fill="#7a3ca8" textLength="20.7" lengthAdjust="spacingAndGlyphs" stroke="#7a3ca8" stroke-width="0.3">M 2</text>
<text x="101.7" y="121.3" font-size="19" fill="#ffffff" textLength="97" lengthAdjust="spacingAndGlyphs" stroke="#ffffff" stroke-width="2.2" paint-order="stroke" stroke-linejoin="round">U_loop,coil</text>
<text x="102.3" y="121.89999999999999" font-size="19" fill="#000000" textLength="97" lengthAdjust="spacingAndGlyphs" fill-opacity="0.45">U_loop,coil</text>
<text x="101.7" y="121.3" font-size="19" fill="#111111" textLength="97" lengthAdjust="spacingAndGlyphs" stroke="#111111" stroke-width="0.25">U_loop,coil</text>
<text x="102" y="237.6" font-size="19" fill="#ffffff" textLength="76" lengthAdjust="spacingAndGlyphs" stroke="#ffffff" stroke-width="2.2" paint-order="stroke" stroke-linejoin="round">U_Bt,coil</text>
<text x="102.6" y="238.2" font-size="19" fill="#000000" textLength="76" lengthAdjust="spacingAndGlyphs" fill-opacity="0.45">U_Bt,coil</text>
<text x="102" y="237.6" font-size="19" fill="#1cb4c0" textLength="76" lengthAdjust="spacingAndGlyphs" stroke="#1cb4c0" stroke-width="0.25">U_Bt,coil</text>
<text x="55.6" y="355.6" font-size="19" fill="#000000" textLength="90.5" lengthAdjust="spacingAndGlyphs" fill-opacity="0.45">U_Rog,coil</text>
<text x="55" y="355" font-size="19" fill="#d01e46" textLength="90.5" lengthAdjust="spacingAndGlyphs" stroke="#d01e46" stroke-width="0.25">U_Rog,coil</text>
<text x="102" y="472" font-size="19" fill="#ffffff" textLength="85" lengthAdjust="spacingAndGlyphs" stroke="#ffffff" stroke-width="2.2" paint-order="stroke" stroke-linejoin="round">U_Photod</text>
<text x="102.6" y="472.6" font-size="19" fill="#000000" textLength="85" lengthAdjust="spacingAndGlyphs" fill-opacity="0.45">U_Photod</text>
<text x="102" y="472" font-size="19" fill="#6cb42c" textLength="85" lengthAdjust="spacingAndGlyphs" stroke="#6cb42c" stroke-width="0.25">U_Photod</text>
<text x="54.300000000000004" y="589.4" font-size="19" fill="#000000" textLength="101.8" lengthAdjust="spacingAndGlyphs" fill-opacity="0.45">U_Diamagn</text>
<text x="53.7" y="588.8" font-size="19" fill="#ee8c1c" textLength="101.8" lengthAdjust="spacingAndGlyphs" stroke="#ee8c1c" stroke-width="0.25">U_Diamagn</text>
<text x="101.3" y="706.3" font-size="19" fill="#ffffff" textLength="62.5" lengthAdjust="spacingAndGlyphs" stroke="#ffffff" stroke-width="2.2" paint-order="stroke" stroke-linejoin="round">Trigger</text>
<text x="101.89999999999999" y="706.9" font-size="19" fill="#000000" textLength="62.5" lengthAdjust="spacingAndGlyphs" fill-opacity="0.45">Trigger</text>
<text x="101.3" y="706.3" font-size="19" fill="#2222a0" textLength="62.5" lengthAdjust="spacingAndGlyphs" stroke="#2222a0" stroke-width="0.25">Trigger</text>
<text x="54.300000000000004" y="865.6" font-size="19" fill="#000000" textLength="26.8" lengthAdjust="spacingAndGlyphs" fill-opacity="0.45">B_t</text>
<text x="53.7" y="865" font-size="19" fill="#ee8c1c" textLength="26.8" lengthAdjust="spacingAndGlyphs" stroke="#ee8c1c" stroke-width="0.25">B_t</text>
<text x="55.1" y="970.6" font-size="19" fill="#000000" textLength="24.2" lengthAdjust="spacingAndGlyphs" fill-opacity="0.45">I_p</text>
<text x="54.5" y="970" font-size="19" fill="#64268a" textLength="24.2" lengthAdjust="spacingAndGlyphs" stroke="#64268a" stroke-width="0.25">I_p</text>
<polygon points="1730.3,700.4 1741.2,690.8 1741.2,709.9" fill="#2222c4" stroke="#2222c4" stroke-width="1.2" stroke-linejoin="round"/>
<rect x="1740.5" y="699.1" width="10.6" height="2.7" fill="#2222c4"/>
<path d="M1710,64.2 H1744 Q1746,64.2 1745.5,67 V97.5 Q1745.5,100 1743.5,98 L1710.5,65.5 Q1709.5,64.2 1710,64.2 Z" fill="#4a4a4a" stroke="#1c1c1c" stroke-width="1"/>
<circle cx="1737.2" cy="71.3" r="4.2" fill="none" stroke="#9c9c9c" stroke-width="1.2"/>
<line x1="1728.3" y1="80.6" x2="1734" y2="75.2" stroke="#9c9c9c" stroke-width="1.6" stroke-linecap="round"/>
<text x="20" y="19.6" font-size="16.5" fill="#e6e6e6" textLength="25.5" lengthAdjust="spacingAndGlyphs">File</text>
<text x="86" y="19.6" font-size="16.5" fill="#e6e6e6" textLength="28.5" lengthAdjust="spacingAndGlyphs">Edit</text>
<text x="155.5" y="19.6" font-size="16.5" fill="#e6e6e6" textLength="44.5" lengthAdjust="spacingAndGlyphs">Utility</text>
<text x="240.8" y="19.6" font-size="16.5" fill="#e6e6e6" textLength="34.2" lengthAdjust="spacingAndGlyphs">Help</text>
<path d="M1785.8,4.2 H1804 L1801,9.4 H1796.3 V25.8 H1790.4 V9.4 H1785.8 Z" fill="#fff"/>
<text x="1797" y="25.8" font-size="29" fill="#ffffff" font-weight="bold" textLength="17.3" lengthAdjust="spacingAndGlyphs">e</text>
<rect x="1815" y="4.2" width="5" height="20" fill="#fff"/>
<polygon points="1823.2,25.8 1830.2,25.8 1826.8,17.2 1823.5,20.5" fill="#fff"/>
<polygon points="1815,25.8 1820.3,25.8 1831,9.2 1825.8,9.2" fill="#1ab8dc" stroke="#2e2e2e" stroke-width="0.6"/>
<path d="M1831.2,25.8 V14.6 H1830 L1831.3,9.2 L1836,4.4 V9.2 H1838.2 V14.6 H1836 V25.8 Z" fill="#fff"/>
<text x="1839.4" y="25.8" font-size="29" fill="#ffffff" font-weight="bold" textLength="9.6" lengthAdjust="spacingAndGlyphs">r</text>
<text x="1847.6" y="25.8" font-size="29" fill="#ffffff" font-weight="bold" textLength="17.8" lengthAdjust="spacingAndGlyphs">o</text>
<text x="1865" y="25.8" font-size="29" fill="#ffffff" font-weight="bold" textLength="15.6" lengthAdjust="spacingAndGlyphs">n</text>
<text x="1880.6" y="25.8" font-size="29" fill="#ffffff" font-weight="bold" textLength="6.8" lengthAdjust="spacingAndGlyphs">i</text>
<text x="1887.4" y="25.8" font-size="29" fill="#ffffff" font-weight="bold" textLength="16.2" lengthAdjust="spacingAndGlyphs">x</text>
<text x="16.3" y="50" font-size="15.8" fill="#f0f0f0" textLength="125" lengthAdjust="spacingAndGlyphs">Waveform View</text>
<path d="M592.8,36.6 H587 V52.4 H592.8" fill="none" stroke="#ececec" stroke-width="1.3"/>
<path d="M1161,36.6 H1167.3 V52.4 H1161" fill="none" stroke="#ececec" stroke-width="1.3"/>
<rect x="587" y="44" width="580.3" height="2" fill="#b8b8b8"/>
<polygon points="595.8,33 611,33 603.3,38.3" fill="#f58a1f"/>
<path d="M596.7,40 H610 V53 H605.8 L603.3,56.8 L600.8,53 H596.7 Z" fill="#f58a1f"/>
<rect x="598.2" y="41.5" width="10.3" height="10.5" fill="#000"/>
<path d="M600,43.4 H606.8 V45.3 H604.5 V50 H602.2 V45.3 H600 Z" fill="#f5a040"/>
<path d="M1769.5,995.5 V29.5 H1920 M1769.5,995.5 H1920" fill="none" stroke="#59585a" stroke-width="1"/>
<text x="1802.8" y="44.2" font-size="15" fill="#e4e4e6" font-weight="bold" textLength="83.8" lengthAdjust="spacingAndGlyphs">Add New...</text>
<defs><linearGradient id="bg" x1="0" y1="0" x2="0" y2="1"><stop offset="0" stop-color="#3e3f42"/><stop offset="0.35" stop-color="#2c2c2c"/><stop offset="0.85" stop-color="#262626"/><stop offset="1" stop-color="#1e1e1e"/></linearGradient></defs>
<rect x="1778.5" y="54.5" width="62.0" height="36.0" rx="6" ry="6" fill="url(#bg)" stroke="#62584f" stroke-width="1"/>
<rect x="1778.5" y="100.5" width="62.0" height="36.0" rx="6" ry="6" fill="url(#bg)" stroke="#62584f" stroke-width="1"/>
<rect x="1778.5" y="146.5" width="62.0" height="36.0" rx="6" ry="6" fill="url(#bg)" stroke="#62584f" stroke-width="1"/>
<rect x="1778.5" y="196.5" width="62.0" height="36.0" rx="6" ry="6" fill="url(#bg)" stroke="#62584f" stroke-width="1"/>
<rect x="1850.3" y="54.5" width="62.200000000000045" height="36.0" rx="6" ry="6" fill="url(#bg)" stroke="#62584f" stroke-width="1"/>
<rect x="1850.3" y="100.5" width="62.200000000000045" height="36.0" rx="6" ry="6" fill="url(#bg)" stroke="#62584f" stroke-width="1"/>
<rect x="1850.3" y="146.5" width="62.200000000000045" height="36.0" rx="6" ry="6" fill="url(#bg)" stroke="#62584f" stroke-width="1"/>
<rect x="1850.3" y="196.5" width="62.200000000000045" height="36.0" rx="6" ry="6" fill="url(#bg)" stroke="#62584f" stroke-width="1"/>
<text x="1785.2" y="77.3" font-size="15.6" fill="#ececec" textLength="50" lengthAdjust="spacingAndGlyphs" stroke="#ececec" stroke-width="0.3">Cursors</text>
<text x="1856.7" y="77.3" font-size="15.6" fill="#ececec" textLength="50.5" lengthAdjust="spacingAndGlyphs" stroke="#ececec" stroke-width="0.3">Callout</text>
<text x="1780.3" y="123.3" font-size="15.6" fill="#ececec" textLength="58.7" lengthAdjust="spacingAndGlyphs" stroke="#ececec" stroke-width="0.3">Measure</text>
<text x="1858.5" y="123.3" font-size="15.6" fill="#ececec" textLength="45.5" lengthAdjust="spacingAndGlyphs" stroke="#ececec" stroke-width="0.3">Search</text>
<text x="1785.8" y="160.6" font-size="15.6" fill="#ececec" textLength="47.4" lengthAdjust="spacingAndGlyphs" stroke="#ececec" stroke-width="0.3">Results</text>
<text x="1792" y="175.7" font-size="15.6" fill="#ececec" textLength="35.5" lengthAdjust="spacingAndGlyphs" stroke="#ececec" stroke-width="0.3">Table</text>
<text x="1867.4" y="169.5" font-size="15.6" fill="#ececec" textLength="28.4" lengthAdjust="spacingAndGlyphs" stroke="#ececec" stroke-width="0.3">Plot</text>
<text x="1856.7" y="219.8" font-size="15.6" fill="#ececec" textLength="50" lengthAdjust="spacingAndGlyphs" stroke="#ececec" stroke-width="0.3">More...</text>
<line x1="1773" y1="189.6" x2="1917" y2="189.6" stroke="#5b544e" stroke-width="1"/>
<line x1="1773" y1="241.4" x2="1917" y2="241.4" stroke="#5b544e" stroke-width="1"/>
<rect x="1798.5" y="203" width="21.5" height="18.6" fill="none" stroke="#b4b4b4" stroke-width="1.6" stroke-dasharray="2.6 2.2"/>
<circle cx="1810.4" cy="210.6" r="4.6" fill="none" stroke="#b4b4b4" stroke-width="1.5"/>
<line x1="1802.4" y1="217.6" x2="1807" y2="213.6" stroke="#b4b4b4" stroke-width="2" stroke-linecap="round"/>
<polygon points="1815.5,216 1823.5,222.5 1820,223 1822,226.5 1820.5,227 1818.5,223.5 1816,225.5" fill="#b4b4b4"/>
<circle cx="1761.8" cy="503.8" r="2.2" fill="#b4b4b4"/>
<circle cx="1761.8" cy="512" r="2.2" fill="#b4b4b4"/>
<circle cx="1761.8" cy="520.5" r="2.2" fill="#b4b4b4"/>
<path d="M3,1078.8 V988.2 Q3,984.2 7,984.2 H88.7 Q92.7,984.2 92.7,988.2 V1078.8 Z" fill="#1e1e1e"/>
<rect x="3" y="1002.3" width="89.7" height="3" fill="#b4b4b4"/>
<rect x="3" y="1005.2" width="89.7" height="16.7" fill="#ff0000"/>
<path d="M3,1021.9 H92.7 V1075 Q92.7,1078.8 88.7,1078.8 H7 Q3,1078.8 3,1075 Z" fill="#c8c8c8"/>
<text x="8.9" y="997.5" font-size="14.5" fill="#f0e850" textLength="27.6" lengthAdjust="spacingAndGlyphs" stroke="#f0e850" stroke-width="0.45">Ch 1</text>
<polygon points="3.5,1021 11.0,1006 18.5,1021" fill="#eeee10" stroke="#34345a" stroke-width="1" stroke-linejoin="round"/>
<line x1="11.0" y1="1011" x2="11.0" y2="1018.5" stroke="#8a8a40" stroke-width="1.4"/>
<text x="19.8" y="1017.7" font-size="14.5" fill="#ffffff" textLength="56.8" lengthAdjust="spacingAndGlyphs" stroke="#ffffff" stroke-width="0.45">Clipping</text>
<text x="8.9" y="1036.6" font-size="14.5" fill="#111111">5 V/div</text>
<text x="8.9" y="1055.7" font-size="14.5" fill="#111111">1 MΩ</text>
<text x="8.9" y="1074" font-size="14.5" fill="#111111">200 kHz</text>
<text x="75.8" y="1069.4" font-size="10" fill="#111">B</text>
<text x="81.3" y="1072.3" font-size="10" fill="#111">w</text>
<path d="M98,1078.8 V988.2 Q98,984.2 102,984.2 H183.7 Q187.7,984.2 187.7,988.2 V1078.8 Z" fill="#1f3f42"/>
<rect x="98" y="1002.3" width="89.69999999999999" height="3" fill="#b4b4b4"/>
<rect x="98" y="1005.2" width="89.69999999999999" height="16.7" fill="#ff0000"/>
<path d="M98,1021.9 H187.7 V1075 Q187.7,1078.8 183.7,1078.8 H102 Q98,1078.8 98,1075 Z" fill="#c8c8c8"/>
<text x="103.9" y="997.5" font-size="14.5" fill="#2ad0d8" textLength="27.6" lengthAdjust="spacingAndGlyphs" stroke="#2ad0d8" stroke-width="0.45">Ch 2</text>
<polygon points="98.5,1021 106.0,1006 113.5,1021" fill="#eeee10" stroke="#34345a" stroke-width="1" stroke-linejoin="round"/>
<line x1="106.0" y1="1011" x2="106.0" y2="1018.5" stroke="#8a8a40" stroke-width="1.4"/>
<text x="114.8" y="1017.7" font-size="14.5" fill="#ffffff" textLength="56.8" lengthAdjust="spacingAndGlyphs" stroke="#ffffff" stroke-width="0.45">Clipping</text>
<text x="103.9" y="1036.6" font-size="14.5" fill="#111111">250 mV/div</text>
<text x="103.9" y="1055.7" font-size="14.5" fill="#111111">1 MΩ</text>
<text x="103.9" y="1074" font-size="14.5" fill="#111111">200 kHz</text>
<text x="170.8" y="1069.4" font-size="10" fill="#111">B</text>
<text x="176.3" y="1072.3" font-size="10" fill="#111">w</text>
<path d="M193,1078.8 V988.2 Q193,984.2 197,984.2 H278.7 Q282.7,984.2 282.7,988.2 V1078.8 Z" fill="#45262a"/>
<rect x="193" y="1002.3" width="89.69999999999999" height="3" fill="#b4b4b4"/>
<rect x="193" y="1005.2" width="89.69999999999999" height="16.7" fill="#ff0000"/>
<path d="M193,1021.9 H282.7 V1075 Q282.7,1078.8 278.7,1078.8 H197 Q193,1078.8 193,1075 Z" fill="#c8c8c8"/>
<text x="198.9" y="997.5" font-size="14.5" fill="#f4f4f4" textLength="27.6" lengthAdjust="spacingAndGlyphs" stroke="#f4f4f4" stroke-width="0.45">Ch 3</text>
<polygon points="193.5,1021 201.0,1006 208.5,1021" fill="#eeee10" stroke="#34345a" stroke-width="1" stroke-linejoin="round"/>
<line x1="201.0" y1="1011" x2="201.0" y2="1018.5" stroke="#8a8a40" stroke-width="1.4"/>
<text x="209.8" y="1017.7" font-size="14.5" fill="#ffffff" textLength="56.8" lengthAdjust="spacingAndGlyphs" stroke="#ffffff" stroke-width="0.45">Clipping</text>
<text x="198.9" y="1036.6" font-size="14.5" fill="#111111">450 mV/div</text>
<text x="198.9" y="1055.7" font-size="14.5" fill="#111111">1 MΩ</text>
<text x="198.9" y="1074" font-size="14.5" fill="#111111">200 kHz</text>
<text x="265.8" y="1069.4" font-size="10" fill="#111">B</text>
<text x="271.3" y="1072.3" font-size="10" fill="#111">w</text>
<path d="M288,1078.8 V1007.1 Q288,1003.1 292,1003.1 H373.7 Q377.7,1003.1 377.7,1007.1 V1078.8 Z" fill="#333e22"/>
<rect x="288" y="1021.4" width="89.69999999999999" height="2.4" fill="#b4b4b4"/>
<path d="M288,1023.8 H377.7 V1075 Q377.7,1078.8 373.7,1078.8 H292 Q288,1078.8 288,1075 Z" fill="#c8c8c8"/>
<text x="293.9" y="1016.3" font-size="14.5" fill="#90d040" textLength="27.6" lengthAdjust="spacingAndGlyphs" stroke="#90d040" stroke-width="0.45">Ch 4</text>
<text x="293.9" y="1036.6" font-size="14.5" fill="#111111">200 mV/div</text>
<text x="293.9" y="1055.7" font-size="14.5" fill="#111111">1 MΩ</text>
<text x="293.9" y="1074" font-size="14.5" fill="#111111">200 kHz</text>
<text x="360.8" y="1069.4" font-size="10" fill="#111">B</text>
<text x="366.3" y="1072.3" font-size="10" fill="#111">w</text>
<path d="M383,1078.8 V1007.1 Q383,1003.1 387,1003.1 H468.7 Q472.7,1003.1 472.7,1007.1 V1078.8 Z" fill="#4a3420"/>
<rect x="383" y="1021.4" width="89.69999999999999" height="2.4" fill="#b4b4b4"/>
<path d="M383,1023.8 H472.7 V1075 Q472.7,1078.8 468.7,1078.8 H387 Q383,1078.8 383,1075 Z" fill="#c8c8c8"/>
<text x="388.9" y="1016.3" font-size="14.5" fill="#f5a030" textLength="27.6" lengthAdjust="spacingAndGlyphs" stroke="#f5a030" stroke-width="0.45">Ch 5</text>
<text x="388.9" y="1036.6" font-size="14.5" fill="#111111">1 V/div</text>
<text x="388.9" y="1055.7" font-size="14.5" fill="#111111">1 MΩ</text>
<text x="388.9" y="1074" font-size="14.5" fill="#111111">200 kHz</text>
<text x="455.8" y="1069.4" font-size="10" fill="#111">B</text>
<text x="461.3" y="1072.3" font-size="10" fill="#111">w</text>
<path d="M478,1078.8 V988.2 Q478,984.2 482,984.2 H563.7 Q567.7,984.2 567.7,988.2 V1078.8 Z" fill="#2828c8"/>
<rect x="478" y="1002.3" width="89.70000000000005" height="3" fill="#b4b4b4"/>
<rect x="478" y="1005.2" width="89.70000000000005" height="16.7" fill="#ff0000"/>
<path d="M478,1021.9 H567.7 V1075 Q567.7,1078.8 563.7,1078.8 H482 Q478,1078.8 478,1075 Z" fill="#c8c8c8"/>
<text x="483.9" y="997.5" font-size="14.5" fill="#ffffff" textLength="27.6" lengthAdjust="spacingAndGlyphs" stroke="#ffffff" stroke-width="0.45">Ch 6</text>
<polygon points="478.5,1021 486.0,1006 493.5,1021" fill="#eeee10" stroke="#34345a" stroke-width="1" stroke-linejoin="round"/>
<line x1="486.0" y1="1011" x2="486.0" y2="1018.5" stroke="#8a8a40" stroke-width="1.4"/>
<text x="494.8" y="1017.7" font-size="14.5" fill="#ffffff" textLength="56.8" lengthAdjust="spacingAndGlyphs" stroke="#ffffff" stroke-width="0.45">Clipping</text>
<text x="483.9" y="1036.6" font-size="14.5" fill="#111111">750 mV/div</text>
<text x="483.9" y="1055.7" font-size="14.5" fill="#111111">1 MΩ</text>
<text x="483.9" y="1074" font-size="14.5" fill="#111111">200 kHz</text>
<text x="550.8" y="1069.4" font-size="10" fill="#111">B</text>
<text x="556.3" y="1072.3" font-size="10" fill="#111">w</text>
<path d="M573,1078.8 V988.2 Q573,984.2 577,984.2 H658.7 Q662.7,984.2 662.7,988.2 V1078.8 Z" fill="#4a3420"/>
<rect x="573" y="1002.3" width="89.70000000000005" height="3" fill="#b4b4b4"/>
<rect x="573" y="1005.2" width="89.70000000000005" height="16.7" fill="#ff0000"/>
<path d="M573,1021.9 H662.7 V1075 Q662.7,1078.8 658.7,1078.8 H577 Q573,1078.8 573,1075 Z" fill="#c8c8c8"/>
<text x="578.9" y="997.5" font-size="14.5" fill="#f5a030" textLength="47.8" lengthAdjust="spacingAndGlyphs" stroke="#f5a030" stroke-width="0.45">Math 1</text>
<polygon points="573.5,1021 581.0,1006 588.5,1021" fill="#eeee10" stroke="#34345a" stroke-width="1" stroke-linejoin="round"/>
<line x1="581.0" y1="1011" x2="581.0" y2="1018.5" stroke="#8a8a40" stroke-width="1.4"/>
<text x="589.8" y="1017.7" font-size="14.5" fill="#ffffff" textLength="65" lengthAdjust="spacingAndGlyphs" stroke="#ffffff" stroke-width="0.45">Empty i...</text>
<text x="578.9" y="1036.6" font-size="14.5" fill="#111111" font-weight="bold" textLength="80.7" lengthAdjust="spacingAndGlyphs">73.3 mT/div</text>
<text x="578.9" y="1055.7" font-size="14.5" fill="#111111" textLength="74" lengthAdjust="spacingAndGlyphs">Intg(Ch2)...</text>
<path d="M668,1078.8 V988.2 Q668,984.2 672,984.2 H753.7 Q757.7,984.2 757.7,988.2 V1078.8 Z" fill="#2e2230"/>
<rect x="668" y="1002.3" width="89.70000000000005" height="3" fill="#b4b4b4"/>
<rect x="668" y="1005.2" width="89.70000000000005" height="16.7" fill="#ff0000"/>
<path d="M668,1021.9 H757.7 V1075 Q757.7,1078.8 753.7,1078.8 H672 Q668,1078.8 668,1075 Z" fill="#c8c8c8"/>
<text x="673.9" y="997.5" font-size="14.5" fill="#ffffff" textLength="47.8" lengthAdjust="spacingAndGlyphs" stroke="#ffffff" stroke-width="0.45">Math 2</text>
<polygon points="668.5,1021 676.0,1006 683.5,1021" fill="#eeee10" stroke="#34345a" stroke-width="1" stroke-linejoin="round"/>
<line x1="676.0" y1="1011" x2="676.0" y2="1018.5" stroke="#8a8a40" stroke-width="1.4"/>
<text x="684.8" y="1017.7" font-size="14.5" fill="#ffffff" textLength="65" lengthAdjust="spacingAndGlyphs" stroke="#ffffff" stroke-width="0.45">Empty i...</text>
<text x="673.9" y="1036.6" font-size="14.5" fill="#111111" font-weight="bold" textLength="79" lengthAdjust="spacingAndGlyphs">147.72 A/...</text>
<text x="673.9" y="1055.7" font-size="14.5" fill="#111111" textLength="74.5" lengthAdjust="spacingAndGlyphs">-Intg(Ch3...</text>
<line x1="1118.5" y1="1000.3" x2="1118.5" y2="1077.6" stroke="#5b544e" stroke-width="1"/>
<line x1="1269.3" y1="1000.3" x2="1269.3" y2="1077.6" stroke="#5b544e" stroke-width="1"/>
<line x1="1811.7" y1="1000.3" x2="1811.7" y2="1077.6" stroke="#5b544e" stroke-width="1"/>
<rect x="1129.2" y="999.5" width="39.4" height="79" rx="6" ry="6" fill="url(#bg)" stroke="#62584f" stroke-width="1"/>
<rect x="1133.4" y="1006.9" width="31.6" height="2" fill="#c02424"/>
<text x="1148.9" y="1032.6" font-size="15.5" fill="#ececec" text-anchor="middle" stroke="#ececec" stroke-width="0.25">Add</text>
<text x="1148.9" y="1048.6" font-size="15.5" fill="#ececec" text-anchor="middle" stroke="#ececec" stroke-width="0.25">New</text>
<text x="1148.9" y="1064.5" font-size="15.5" fill="#ececec" text-anchor="middle" stroke="#ececec" stroke-width="0.25">Math</text>
<rect x="1174.2" y="999.5" width="39.4" height="79" rx="6" ry="6" fill="url(#bg)" stroke="#62584f" stroke-width="1"/>
<rect x="1178.4" y="1006.9" width="31.6" height="2" fill="#c6cee0"/>
<text x="1193.9" y="1032.6" font-size="15.5" fill="#ececec" text-anchor="middle" stroke="#ececec" stroke-width="0.25">Add</text>
<text x="1193.9" y="1048.6" font-size="15.5" fill="#ececec" text-anchor="middle" stroke="#ececec" stroke-width="0.25">New</text>
<text x="1193.9" y="1064.5" font-size="15.5" fill="#ececec" text-anchor="middle" stroke="#ececec" stroke-width="0.25">Ref</text>
<rect x="1219.2" y="999.5" width="39.4" height="79" rx="6" ry="6" fill="url(#bg)" stroke="#62584f" stroke-width="1"/>
<rect x="1223.4" y="1006.9" width="31.6" height="2" fill="#c650f4"/>
<text x="1238.9" y="1032.6" font-size="15.5" fill="#ececec" text-anchor="middle" stroke="#ececec" stroke-width="0.25">Add</text>
<text x="1238.9" y="1048.6" font-size="15.5" fill="#ececec" text-anchor="middle" stroke="#ececec" stroke-width="0.25">New</text>
<text x="1238.9" y="1064.5" font-size="15.5" fill="#ececec" text-anchor="middle" stroke="#ececec" stroke-width="0.25">Bus</text>
<rect x="1280.8" y="1003.7" width="198.0" height="74.09999999999991" rx="4" ry="4" fill="#c8c8c8" stroke="#1a1a1a" stroke-width="1"/>
<path d="M1281.3,1022.5 V1007.7 Q1281.3,1004.2 1284.8,1004.2 H1474.8 Q1478.3,1004.2 1478.3,1007.7 V1022.5 Z" fill="#58585a"/>
<rect x="1281.3" y="1022.5" width="197.0" height="2.3" fill="#9a9a9a"/>
<text x="1286.5" y="1018.2" font-size="15.8" fill="#eeeeee" stroke="#eeeeee" stroke-width="0.3">Horizontal</text>
<text x="1286" y="1036.7" font-size="14.5" fill="#111111">4.5 ms/div</text>
<text x="1390.6" y="1036.7" font-size="14.5" fill="#111111">45 ms</text>
<text x="1286" y="1055.5" font-size="14.5" fill="#111111">SR: 1 MS/s</text>
<text x="1391.5" y="1055.5" font-size="14.5" fill="#111111">1 µs/pt</text>
<text x="1286" y="1074.2" font-size="14.5" fill="#111111">RL: 45 kpts</text>
<text x="1405" y="1074.2" font-size="14.5" fill="#111111">3%</text>
<path d="M1391.7,1063 H1400 V1071 H1397.5 L1395.8,1073.8 L1394.1,1071 H1391.7 Z" fill="#f58a1f"/>
<rect x="1393" y="1064.3" width="5.7" height="5.6" fill="#000"/>
<path d="M1394,1065.6 H1397.7 M1395.85,1065.6 V1069.2" stroke="#f5a040" stroke-width="1" fill="none"/>
<rect x="1485.8" y="1003.7" width="158.20000000000005" height="74.09999999999991" rx="4" ry="4" fill="#c8c8c8" stroke="#1a1a1a" stroke-width="1"/>
<path d="M1486.3,1023 V1007.7 Q1486.3,1004.2 1489.8,1004.2 H1640 Q1643.5,1004.2 1643.5,1007.7 V1023 Z" fill="#58585a"/>
<rect x="1486.3" y="1023" width="157.20000000000005" height="2.3" fill="#9a9a9a"/>
<text x="1491.5" y="1018.2" font-size="15.8" fill="#eeeeee" stroke="#eeeeee" stroke-width="0.3">Trigger</text>
<rect x="1490.5" y="1025.5" width="29" height="14.8" rx="4" ry="4" fill="#2424c4" stroke="#111" stroke-width="1"/>
<text x="1505" y="1037.8" font-size="14.5" fill="#ffffff" text-anchor="middle">6</text>
<polyline points="1530,1037.2 1535,1037.2 1542,1027.5 1546.5,1027.5" fill="none" stroke="#3a3a8a" stroke-width="1.2"/>
<text x="1555.7" y="1037" font-size="14.5" fill="#111111">3 V</text>
<rect x="1651" y="1003.7" width="148.20000000000005" height="74.09999999999991" rx="4" ry="4" fill="#c8c8c8" stroke="#1a1a1a" stroke-width="1"/>
<path d="M1651.5,1023 V1007.7 Q1651.5,1004.2 1655,1004.2 H1795.2 Q1798.7,1004.2 1798.7,1007.7 V1023 Z" fill="#58585a"/>
<rect x="1651.5" y="1023" width="147.20000000000005" height="2.3" fill="#9a9a9a"/>
<text x="1656.7" y="1018.2" font-size="15.8" fill="#eeeeee" stroke="#eeeeee" stroke-width="0.3">Acquisition</text>
<text x="1655.5" y="1036.8" font-size="14.5" fill="#111111">Manual,</text>
<text x="1736.4" y="1036.8" font-size="14.5" fill="#111111">Analyze</text>
<text x="1655.5" y="1055.9" font-size="14.5" fill="#111111">High Res: 16 bits</text>
<text x="1655.5" y="1074.7" font-size="14.5" fill="#111111">Single: 1 /1</text>
<rect x="1822.4" y="999.2" width="88.6" height="35.2" rx="6" ry="6" fill="#ff1e28" stroke="#6c6c6c" stroke-width="1"/>
<text x="1866.7" y="1020.5" font-size="14.5" fill="#ffffff" text-anchor="middle" font-weight="bold" textLength="55.7" lengthAdjust="spacingAndGlyphs">Stopped</text>
<rect x="1822.4" y="1040.5" width="88.6" height="37.3" rx="6" ry="6" fill="#c8c8c8"/>
<text x="1866.7" y="1056.2" font-size="14.5" fill="#111111" text-anchor="middle" textLength="84.6" lengthAdjust="spacingAndGlyphs">28 May 2025</text>
<text x="1866.7" y="1072.5" font-size="14.5" fill="#111111" text-anchor="middle" textLength="72.2" lengthAdjust="spacingAndGlyphs">5:23:30 PM</text>
</g></svg></body></html>
